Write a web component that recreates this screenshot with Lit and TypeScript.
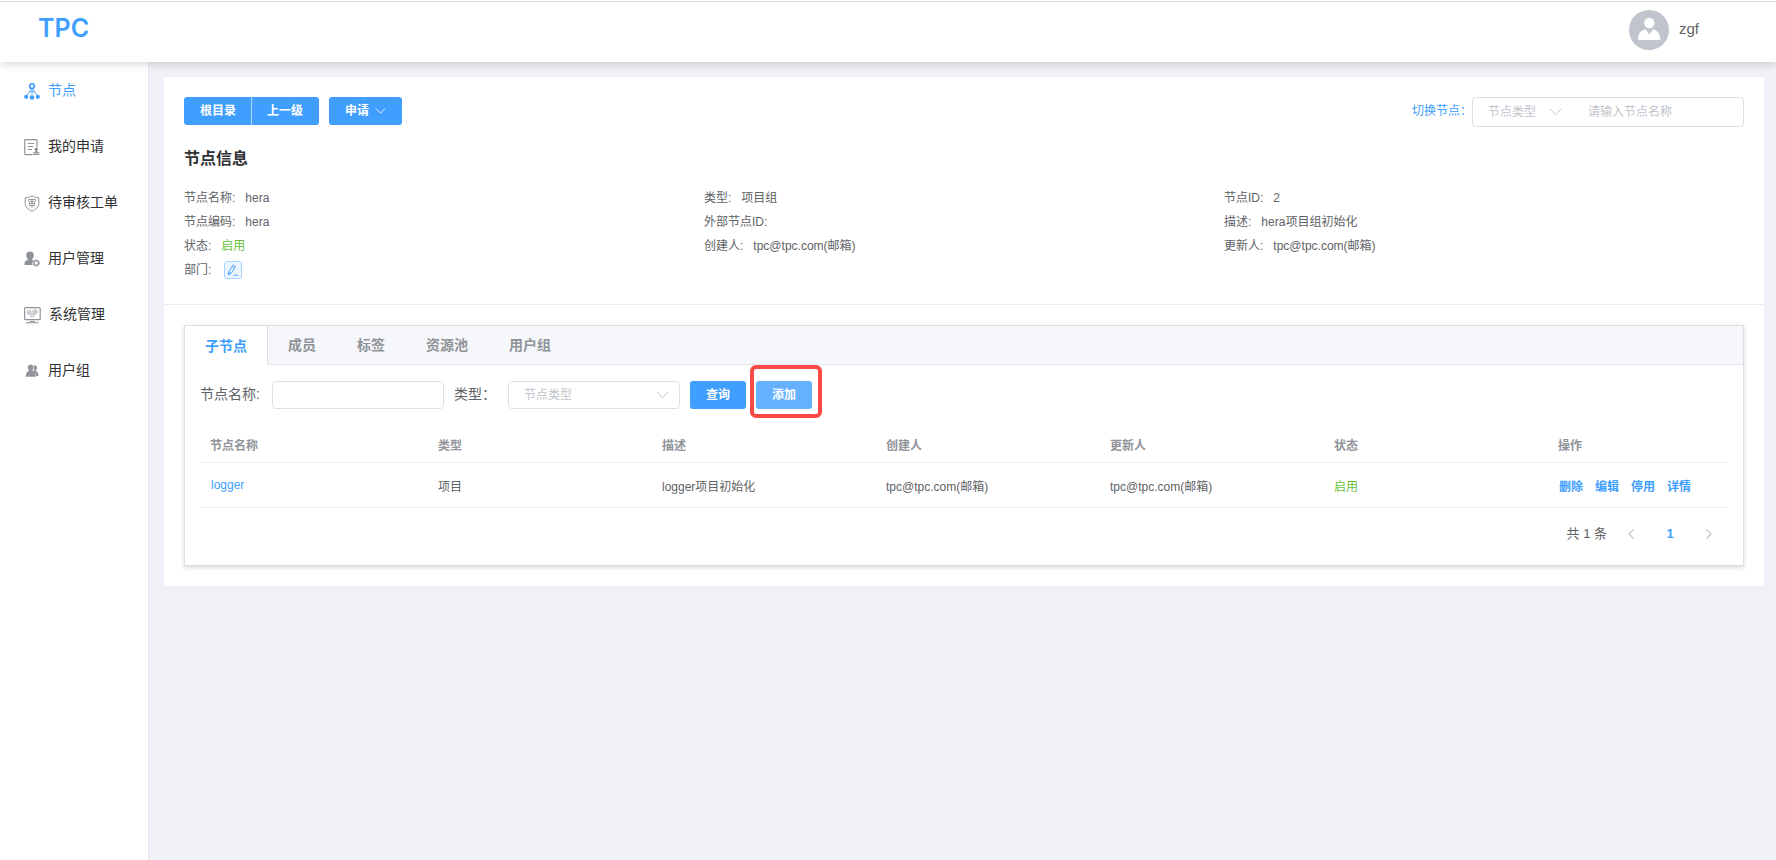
import { LitElement, html, css, svg } from "lit";
import { customElement, state } from "lit/decorators.js";
import { classMap } from "lit/directives/class-map.js";

const fontStack = css`"Liberation Sans", "Noto Sans CJK SC", sans-serif`;

const icons = {
  node: svg`
    <g fill="none" stroke="currentColor">
      <circle cx="8" cy="3.2" r="2.3" stroke-width="1.7"/>
      <path d="M8 5.8V12M7.2 6 3 12M8.8 6 13 12M5 9.2 8 8.2l3 1" stroke-width="0.8"/>
    </g>
    <g fill="currentColor"><circle cx="2.2" cy="13.8" r="2.1"/><circle cx="8" cy="14.5" r="2.3"/><circle cx="13.8" cy="13.8" r="2.1"/></g>`,
  apply: svg`
    <path d="M13 8V1.200a.6.6 0 0 0-.6-.6H1.400a.6.6 0 0 0-.6.6v13.800a.6.6 0 0 0 .6.6H8.500" fill="none" stroke="currentColor" stroke-width="1.200"/>
    <path d="M3.800 4.500h6.400M3.800 7.500h5.400M3.800 10.500h4" fill="none" stroke="currentColor" stroke-width="1.200"/>
    <path d="M12.300 8.600a1.700 1.700 0 0 1 1 3.100l.3 1.600h1.900v1.200h-6.400v-1.200H11l.3-1.600a1.700 1.700 0 0 1 1-3.100zM9.100 15.100h6.400v1H9.100z" fill="currentColor"/>`,
  review: svg`
    <path d="M8 .8C6 2.200 3.600 2.700 1.200 2.800v5.700c0 3.500 3 6.100 6.800 7.700 3.800-1.600 6.800-4.200 6.800-7.700V2.800C12.400 2.700 10 2.200 8 .8z" fill="none" stroke="currentColor" stroke-width="1"/>
    <path d="M4.500 6V4.500h7V6M8 3.500v9.500M5.500 6.500h5v4h-5zM5.500 8.500h5" fill="none" stroke="currentColor" stroke-width="0.900"/>`,
  user: svg`
    <path d="M6 .6a3.800 3.800 0 0 1 3.800 3.900c0 1.500-.7 2.700-1.600 3.500.2.800.8 1.100 1.500 1.500a4 4 0 0 0-1 4.500H.6c-.3-2.700.5-4.200 3-5 .300-.200.300-.600.100-1A4.600 4.600 0 0 1 2.200 4.500 3.800 3.800 0 0 1 6 .6z" fill="currentColor"/>
    <circle cx="12.300" cy="12" r="2.300" fill="none" stroke="currentColor" stroke-width="1.300"/>
    <circle cx="12.300" cy="12" r="3.200" fill="none" stroke="currentColor" stroke-width="0.900" stroke-dasharray="1.600 1.750"/>`,
  system: svg`
    <rect x=".6" y=".7" width="15.600" height="12" rx="1" fill="none" stroke="currentColor" stroke-width="1.200"/>
    <g fill="none" stroke="currentColor" stroke-width="0.700"><circle cx="5.200" cy="5.500" r="2"/><circle cx="5.200" cy="5.500" r=".5"/><circle cx="11" cy="4.900" r="2.300"/><circle cx="11" cy="4.900" r=".8"/><circle cx="8.400" cy="8.600" r="1.500"/></g>
    <path d="M5.800 14.500h5M2 15.800h12.600" fill="none" stroke="currentColor" stroke-width="1.100"/>`,
  group: svg`
    <path d="M9.600 2.500a2.600 2.600 0 0 1 2.200 4.700l.1.900c1.700.6 2.500 2.100 2.600 5H12c-.2-2.300-1-3.700-2.600-4.600.9-1.500 1.100-4 .2-6z" fill="currentColor"/>
    <path d="M6.700 1.400a3 3 0 0 1 1.900 5.300l.1 1.400c2 .7 2.900 2.500 3 5.700H1.700c.1-3.200 1-5 3-5.700l.1-1.400a3 3 0 0 1 1.900-5.300z" fill="currentColor"/>`,
};

type IconName = keyof typeof icons;

const chevron = (path = "M1 1l5.500 5.500L12 1") => html`
  <svg class="chevron" width="13" height="8" viewBox="0 0 13 8" aria-hidden="true">
    <path d=${path} fill="none" stroke="currentColor" stroke-width="1"/>
  </svg>`;

@customElement("app-header")
class AppHeader extends LitElement {
  static styles = css`
    :host { display: block; position: relative; z-index: 1; padding-top: 1px; background: #fff; box-shadow: 0 2px 8px rgba(0, 0, 0, 0.16); }
    .bar { display: flex; justify-content: space-between; align-items: flex-start; height: 60px; padding: 0 77px 0 38px; border-top: 1px solid #dcdcdc; }
    .logo { margin: 0; font: 600 25px/52px Inter, "Liberation Sans", sans-serif; color: #409eff; }
    .user { display: flex; align-items: center; gap: 10px; margin-top: 8px; font-size: 15px; line-height: 20px; color: #606266; }
    .user span { padding-bottom: 2px; }
    .avatar { border-radius: 50%; background: #c0c4cc; }
  `;
  render() {
    return html`
      <header class="bar">
        <h1 class="logo">TPC</h1>
        <div class="user">
          <svg class="avatar" width="40" height="40" viewBox="0 0 40 40" aria-hidden="true">
            <circle cx="20.300" cy="13" r="5.200" fill="#fff"/>
            <path d="M9 30c0-6 2.500-9.800 7.700-10.800L20.300 24.500l3.900-5.300C29 20.500 31.300 24.300 31.300 30z" fill="#fff"/>
          </svg>
          <span>zgf</span>
        </div>
      </header>`;
  }
}

@customElement("side-menu")
class SideMenu extends LitElement {
  static styles = css`
    :host { display: block; background: #fff; border-right: 1px solid #e2e4e9; }
    .menu { display: flex; flex-direction: column; padding-top: 1px; }
    .item { display: flex; align-items: center; gap: 8px; height: 56px; padding-left: 24px; font-size: 14px; line-height: 20px; color: #303133; text-decoration: none; }
    .item span { padding-bottom: 2px; }
    .icon { color: #909399; }
    .active, .active .icon { color: #409eff; }
  `;
  private items: { icon: IconName; label: string; width?: number }[] = [
    { icon: "node", label: "节点" },
    { icon: "apply", label: "我的申请" },
    { icon: "review", label: "待审核工单" },
    { icon: "user", label: "用户管理" },
    { icon: "system", label: "系统管理", width: 17 },
    { icon: "group", label: "用户组" },
  ];
  render() {
    return html`
      <nav class="menu">
        ${this.items.map(({ icon, label, width = 16 }, i) => html`
          <a href="#" class=${classMap({ item: true, active: i === 0 })}>
            <svg class="icon" width=${width} height="17" viewBox="0 0 ${width} 17" aria-hidden="true">${icons[icon]}</svg>
            <span>${label}</span>
          </a>`)}
      </nav>`;
  }
}

const controls = css`
  button { font: inherit; cursor: pointer; }
  input, select { box-sizing: border-box; min-width: 0; margin: 0; font: 12px/26px ${fontStack}; color: #606266; background: transparent; border: 0; outline: 0; }
  select { appearance: none; color: #c0c4cc; }
  ::placeholder { color: #c0c4cc; opacity: 1; }
  .btn { box-sizing: border-box; height: 28px; padding: 0 16px; font-size: 12px; font-weight: 700; line-height: 28px; color: #fff; background: #409eff; border: 0; border-radius: 3px; }
  .picker { display: grid; align-items: center; }
  .picker > * { grid-area: 1 / 1; }
  .picker .chevron { justify-self: end; margin-right: 11px; color: #c0c4cc; pointer-events: none; }
`;

@customElement("node-info")
class NodeInfo extends LitElement {
  static styles = [controls, css`
    :host { display: block; padding: 20px 20px 22px; border-bottom: 1px solid #ebecef; }
    .toolbar { display: flex; justify-content: space-between; align-items: flex-start; }
    .actions { display: flex; gap: 10px; }
    .pair { display: flex; }
    .pair .btn:first-child { border-radius: 3px 0 0 3px; }
    .pair .btn:last-child { margin-left: -1px; padding-left: 15px; border-left: 1px solid #b3d8ff; border-radius: 0 3px 3px 0; }
    .drop { display: flex; align-items: center; gap: 6px; }
    .drop .chevron { width: 11px; }
    .switch { display: flex; align-items: center; font-size: 12px; line-height: 20px; color: #409eff; }
    .switch label { padding-bottom: 2px; }
    .box { display: flex; width: 272px; box-sizing: border-box; height: 30px; border: 1px solid #dcdfe6; border-radius: 4px; }
    .box .picker { width: 100px; }
    .box select { width: 100%; padding: 0 15px; }
    .box input { flex: 1; padding: 0 15px; }
    .title { margin: 20px 0 15px; font-size: 16px; line-height: 24px; color: #303133; }
    .grid { display: grid; grid-template-columns: repeat(3, 1fr); margin: 0; font-size: 12px; line-height: 24px; color: #606266; }
    .cell { display: flex; align-items: center; gap: 10px; height: 24px; }
    .cell dd { display: flex; margin: 0; }
    .ok { color: #67c23a; }
    .edit { display: grid; place-items: center; box-sizing: border-box; width: 18px; height: 18px; margin-left: 3px; padding: 0; color: #409eff; background: #ecf5ff; border: 1px solid #a9d3ff; border-radius: 3px; }
  `];
  private fields: [string, string][] = [
    ["节点名称", "hera"], ["类型", "项目组"], ["节点ID", "2"],
    ["节点编码", "hera"], ["外部节点ID", ""], ["描述", "hera项目组初始化"],
    ["状态", "启用"], ["创建人", "tpc@tpc.com(邮箱)"], ["更新人", "tpc@tpc.com(邮箱)"],
  ];
  render() {
    return html`
      <div class="toolbar">
        <div class="actions">
          <div class="pair">
            <button class="btn">根目录</button><button class="btn">上一级</button>
          </div>
          <button class="btn drop">申请${chevron()}</button>
        </div>
        <div class="switch">
          <label for="switch-name">切换节点：</label>
          <div class="box">
            <div class="picker">
              <select aria-label="节点类型"><option>节点类型</option></select>
              ${chevron()}
            </div>
            <input id="switch-name" placeholder="请输入节点名称">
          </div>
        </div>
      </div>
      <h2 class="title">节点信息</h2>
      <dl class="grid">
        ${this.fields.map(([name, value]) => html`
          <div class="cell"><dt>${name}:</dt><dd class=${classMap({ ok: name === "状态" })}>${value}</dd></div>`)}
        <div class="cell">
          <dt>部门:</dt>
          <dd><button class="edit" aria-label="编辑部门">
            <svg width="12" height="12" viewBox="0 0 12 12" fill="none" stroke="currentColor" stroke-width="0.900" aria-hidden="true">
              <path d="M6.200 1 8.500 2.400 4.100 9.600 1.400 11l.2-2.800zM5.300 2.500l2.300 1.400M1.600 8.200l2.300 1.400M6.500 11.200h4.800"/>
            </svg>
          </button></dd>
        </div>
      </dl>`;
  }
}

@customElement("child-panel")
class ChildPanel extends LitElement {
  static styles = [controls, css`
    :host { display: block; margin: 20px; border: 1px solid #dcdfe6; box-shadow: 0 2px 4px rgba(0, 0, 0, 0.12), 0 0 6px rgba(0, 0, 0, 0.04); }
    .tabs { display: flex; height: 38px; background: #f5f7fa; border-bottom: 1px solid #e4e7ed; }
    .tab { box-sizing: content-box; height: 38px; padding: 0 20px; font-size: 14px; font-weight: 700; line-height: 38px; color: #909399; background: transparent; border: 0; border-right: 1px solid transparent; }
    .tab.active { height: 39px; color: #409eff; background: #fff; border-right-color: #dcdfe6; }
    .body { padding: 16px 15px 16px; }
    .filter { display: flex; align-items: center; gap: 10px; font-size: 14px; line-height: 20px; color: #606266; }
    .field { display: flex; align-items: center; }
    .field label { padding-bottom: 2px; }
    .name label { width: 72px; }
    .type label { width: 54px; }
    .control { width: 172px; height: 28px; border: 1px solid #dcdfe6; border-radius: 4px; }
    input.control { padding: 0 15px; }
    .picker select { padding: 0 15px; }
    .marked { position: relative; display: flex; }
    .light { background: #66b1ff; }
    .marked::after { content: ""; position: absolute; inset: -16px -10px -9px -6px; border: 4px solid #f94a47; border-radius: 6px; pointer-events: none; }
    .table { width: 100%; margin-top: 17px; border-collapse: collapse; table-layout: fixed; font-size: 12px; text-align: left; color: #606266; }
    .first { width: 228px; }
    .last { width: 180px; }
    th, td { padding: 0 10px; border-bottom: 1px solid #ebeef5; }
    th { height: 36px; color: #909399; }
    td { height: 44px; }
    .link { padding-left: 1px; color: #409eff; text-decoration: none; }
    .ok { color: #67c23a; }
    .ops { display: flex; gap: 11px; font-weight: 700; }
    .pager { display: flex; justify-content: flex-end; align-items: center; margin-top: 11px; padding-right: 3px; height: 30px; font-size: 13px; line-height: 20px; color: #606266; }
    .pager button { display: grid; place-items: center; width: 32px; height: 28px; padding: 0; background: transparent; border: 0; color: #c0c4cc; }
    .total { margin-right: 8px; }
    .pager .page { width: 46px; font-weight: 700; color: #409eff; }
  `];
  @state() private tab = 0;
  private tabs = ["子节点", "成员", "标签", "资源池", "用户组"];
  private columns = ["节点名称", "类型", "描述", "创建人", "更新人", "状态", "操作"];
  private rows = [{ name: "logger", type: "项目", desc: "logger项目初始化", creator: "tpc@tpc.com(邮箱)", updater: "tpc@tpc.com(邮箱)", status: "启用" }];
  private arrow(path: string) {
    return html`<svg width="6" height="10" viewBox="0 0 6 10" aria-hidden="true"><path d=${path} fill="none" stroke="currentColor" stroke-width="1.200"/></svg>`;
  }
  render() {
    return html`
      <div class="tabs" role="tablist">
        ${this.tabs.map((t, i) => html`
          <button role="tab" aria-selected=${i === this.tab} class=${classMap({ tab: true, active: i === this.tab })} @click=${() => (this.tab = i)}>${t}</button>`)}
      </div>
      <div class="body">
        <form class="filter" @submit=${(e: Event) => e.preventDefault()}>
          <div class="field name"><label for="name">节点名称:</label><input id="name" class="control"></div>
          <div class="field type">
            <label for="type">类型：</label>
            <div class="picker"><select id="type" class="control"><option>节点类型</option></select>${chevron()}</div>
          </div>
          <button class="btn">查询</button>
          <div class="marked"><button class="btn light" type="button">添加</button></div>
        </form>
        <table class="table">
          <colgroup><col class="first"><col span="5"><col class="last"></colgroup>
          <thead><tr>${this.columns.map((c) => html`<th scope="col">${c}</th>`)}</tr></thead>
          <tbody>
            ${this.rows.map((r) => html`
              <tr>
                <td><a class="link" href="#">${r.name}</a></td>
                <td>${r.type}</td><td>${r.desc}</td><td>${r.creator}</td><td>${r.updater}</td>
                <td class="ok">${r.status}</td>
                <td><div class="ops">${["删除", "编辑", "停用", "详情"].map((o) => html`<a class="link" href="#">${o}</a>`)}</div></td>
              </tr>`)}
          </tbody>
        </table>
        <div class="pager">
          <span class="total">共 ${this.rows.length} 条</span>
          <button aria-label="上一页">${this.arrow("M5.500 .5 1 5l4.500 4.500")}</button>
          <button class="page">1</button>
          <button aria-label="下一页">${this.arrow("M.5 .5 5 5 .5 9.500")}</button>
        </div>
      </div>`;
  }
}

@customElement("app-root")
class AppRoot extends LitElement {
  static styles = css`
    :host { display: flex; flex-direction: column; min-height: 100vh; font-family: ${fontStack}; background: #f0f1f6; }
    .layout { flex: 1; display: grid; grid-template-columns: 149px 1fr; }
    .content { min-width: 0; padding: 15px 12px 15px 15px; }
    .card { display: flow-root; background: #fff; }
  `;
  render() {
    return html`
      <app-header></app-header>
      <div class="layout">
        <side-menu></side-menu>
        <main class="content">
          <div class="card"><node-info></node-info><child-panel></child-panel></div>
        </main>
      </div>`;
  }
}
